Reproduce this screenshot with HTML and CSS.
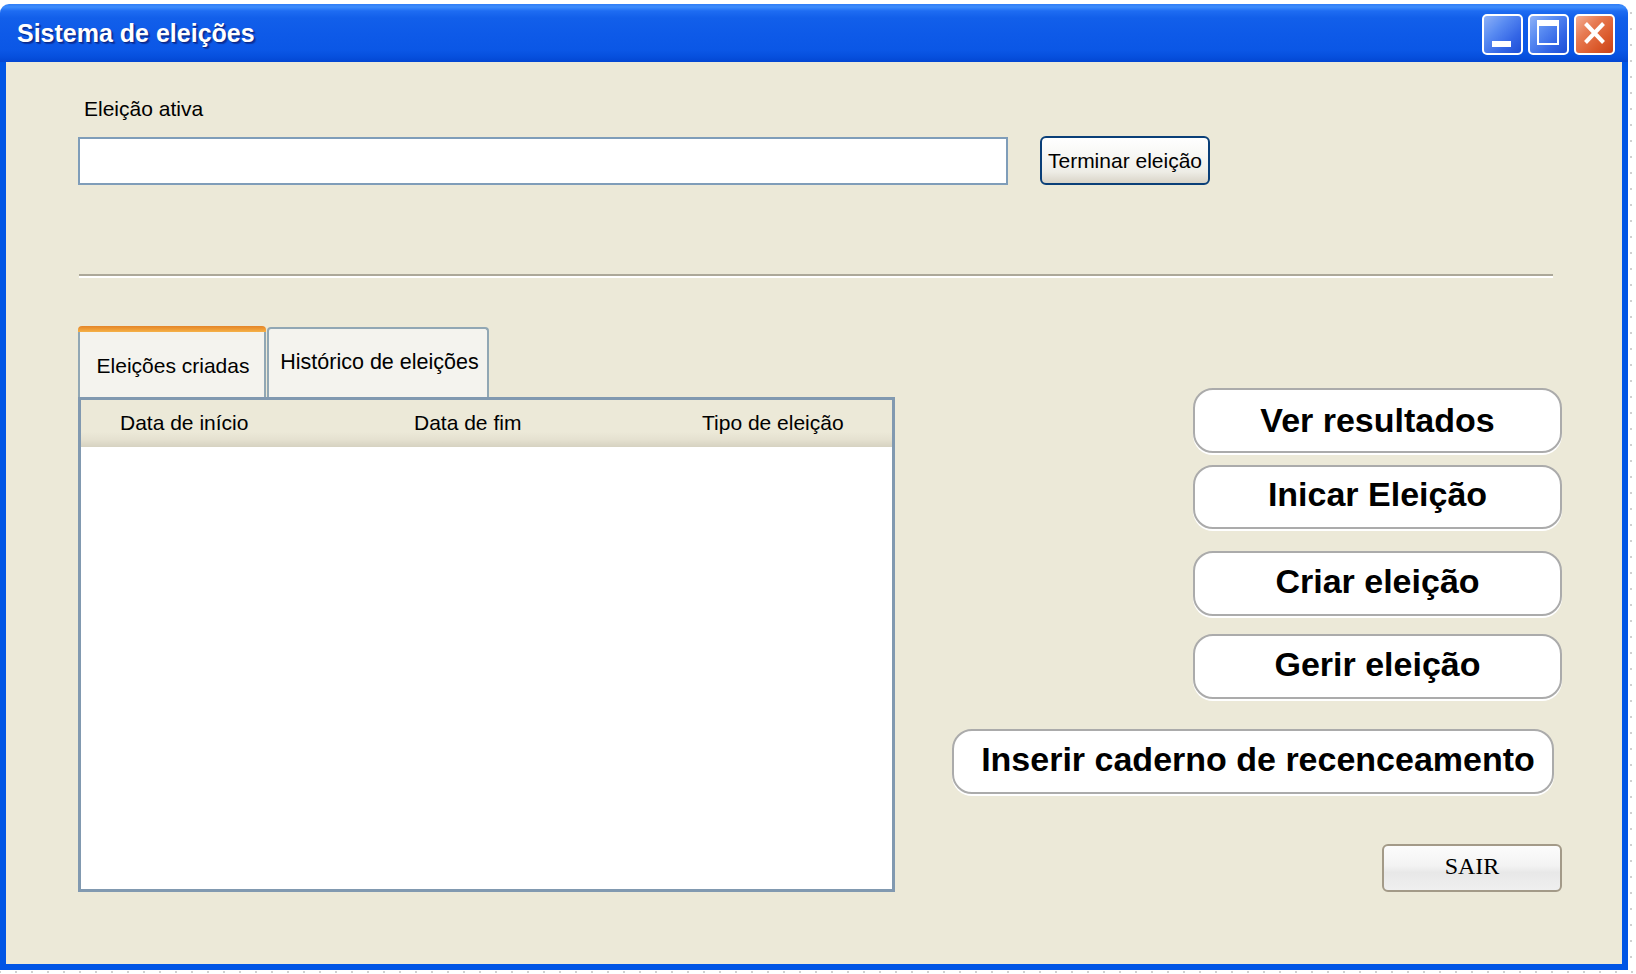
FILE: index.html
```html
<!DOCTYPE html>
<html lang="pt">
<head>
<meta charset="utf-8">
<title>Sistema de eleições</title>
<link rel="stylesheet" href="styles.css">
</head>
<body>
<div class="screen">
  <div class="top-row">
    <div class="window">
      <div class="titlebar">
        <div class="title">Sistema de eleições</div>
        <div class="tb-buttons">
          <div class="tb-btn tb-blue">
            <svg width="37" height="37" viewBox="0 0 37 37"><rect x="8" y="25" width="19" height="6" fill="#fff"/></svg>
          </div>
          <div class="tb-btn tb-blue">
            <svg width="37" height="37" viewBox="0 0 37 37"><rect x="8" y="5" width="20" height="23" fill="none" stroke="#fff" stroke-width="2"/><rect x="7" y="4" width="22" height="6" fill="#fff"/></svg>
          </div>
          <div class="tb-btn tb-red">
            <svg width="37" height="37" viewBox="0 0 37 37"><path d="M9.5 7.5 L27.5 26.5 M27.5 7.5 L9.5 26.5" stroke="#fff" stroke-width="4" fill="none"/></svg>
          </div>
        </div>
      </div>
      <div class="frame">
        <div class="content">
          <div class="label">Eleição ativa</div>
          <div class="active-row">
            <div class="active-input"></div>
            <button class="btn-end">Terminar eleição</button>
          </div>
          <div class="separator"></div>
          <div class="lower">
            <div class="tabs-block">
              <div class="tabs">
                <div class="tab tab-active">
                  <div class="tab-accent"></div>
                  <div class="tab-body">Eleições criadas</div>
                </div>
                <div class="tab tab-idle">Histórico de eleições</div>
              </div>
              <div class="table">
                <div class="thead">
                  <div class="th">Data de início</div>
                  <div class="th">Data de fim</div>
                  <div class="th">Tipo de eleição</div>
                </div>
                <div class="tbody"></div>
              </div>
            </div>
            <div class="actions">
              <button class="big-btn">Ver resultados</button>
              <button class="big-btn b-iniciar">Inicar Eleição</button>
              <button class="big-btn b-criar">Criar eleição</button>
              <button class="big-btn b-gerir">Gerir eleição</button>
              <button class="big-btn b-inserir">Inserir caderno de recenceamento</button>
              <button class="exit">SAIR</button>
            </div>
          </div>
        </div>
      </div>
    </div>
    <div class="dots-v"></div>
  </div>
  <div class="dots-h"></div>
</div>
</body>
</html>
```

FILE: styles.css
```css
html, body {
  margin: 0;
  padding: 0;
  background: #ffffff;
}

body {
  font-family: "Liberation Sans", Arial, sans-serif;
  color: #000;
}

.screen {
  width: 1636px;
  height: 974px;
  display: flex;
  flex-direction: column;
  overflow: hidden;
}

.top-row {
  display: flex;
  height: 970px;
}

.window {
  width: 1628px;
  height: 966px;
  margin-top: 4px;
  display: flex;
  flex-direction: column;
}

.titlebar {
  height: 58px;
  flex: none;
  border-radius: 9px 9px 0 0;
  background: linear-gradient(to bottom,
    #2F7DF6 0px, #3D8CFC 3px, #1E6CF2 7px, #125FEA 14px,
    #0E5AE8 30px, #0B57E6 46px, #064FDD 53px, #0346D2 58px);
  display: flex;
  align-items: center;
  justify-content: space-between;
  padding: 0 13px 0 17px;
  box-sizing: border-box;
}

.title {
  color: #fff;
  font-weight: bold;
  font-size: 25px;
  text-shadow: 1px 1px 0 #0B2A8C, 2px 2px 1px rgba(10, 30, 120, 0.6);
  margin-top: 1px;
}

.tb-buttons {
  display: flex;
  gap: 5px;
  margin-top: 3px;
}

.tb-btn {
  width: 41px;
  height: 41px;
  border: 2px solid #fff;
  border-radius: 5px;
  box-sizing: border-box;
  display: flex;
}

.tb-blue {
  background: linear-gradient(135deg, #8EB1F7 0%, #5A8CF2 35%, #3466E6 70%, #1E4FD6 100%);
}

.tb-red {
  background: linear-gradient(135deg, #F3AE94 0%, #E77A52 35%, #DB5A2C 70%, #C8421A 100%);
}

.frame {
  flex: 1;
  background: #0055E5;
  padding: 0 6px 6px 6px;
  display: flex;
}

.content {
  flex: 1;
  background: #ECE9D8;
  padding: 35px 60px 0 72px;
  display: flex;
  flex-direction: column;
}

.label {
  font-size: 21px;
  line-height: 24px;
  padding-left: 6px;
}

.active-row {
  display: flex;
  align-items: flex-start;
  margin-top: 15px;
}

.active-input {
  width: 930px;
  height: 48px;
  margin-top: 1px;
  background: #fff;
  border: 2px solid #7F9DB9;
  box-sizing: border-box;
}

.btn-end {
  margin-left: 32px;
  width: 170px;
  height: 49px;
  padding: 0;
  border: 2px solid #0A3F78;
  border-radius: 6px;
  background: linear-gradient(to bottom, #FFFFFF 0%, #F7F7F4 40%, #EEEDE6 75%, #D9D4C8 100%);
  font-family: "Liberation Sans", Arial, sans-serif;
  font-size: 21px;
  color: #000;
  box-sizing: border-box;
}

.separator {
  margin-top: 89px;
  margin-left: 1px;
  width: 1474px;
  height: 2px;
  background: #ACA899;
  border-bottom: 2px solid #fff;
}

.lower {
  display: flex;
  margin-top: 48px;
}

.tabs-block {
  width: 817px;
  display: flex;
  flex-direction: column;
}

.tabs {
  display: flex;
  align-items: flex-end;
  height: 71px;
}

.tab {
  box-sizing: border-box;
  font-size: 21px;
  line-height: 24px;
  text-align: center;
}

.tab-active {
  width: 188px;
  height: 71px;
  display: flex;
  flex-direction: column;
}

.tab-accent {
  height: 6px;
  border-radius: 4px 4px 0 0;
  background: linear-gradient(to bottom, #E3852A 0%, #EE9A34 50%, #F5B24A 100%);
}

.tab-body {
  flex: 1;
  background: #F4F3EE;
  border-left: 2px solid #91A7B4;
  border-right: 2px solid #91A7B4;
  padding-top: 22px;
  padding-left: 2px;
}

.tab-idle {
  width: 222px;
  height: 70px;
  margin-left: 1px;
  background: #F4F3EE;
  border: 2px solid #91A7B4;
  border-bottom: none;
  border-radius: 4px 4px 0 0;
  padding-top: 21px;
  font-size: 21.5px;
  padding-left: 3px;
}

.table {
  height: 495px;
  border: 3px solid #8199B0;
  background: #fff;
  box-sizing: border-box;
  display: flex;
  flex-direction: column;
}

.thead {
  height: 47px;
  flex: none;
  display: grid;
  grid-template-columns: 294px 288px 1fr;
  align-items: center;
  background: linear-gradient(to bottom, #ECE9D8 0%, #ECE9D8 68%, #E5E1D0 84%, #D6D2C1 100%);
  font-size: 21px;
  line-height: 24px;
}

.th {
  padding-left: 39px;
  padding-bottom: 2px;
  white-space: nowrap;
}

.tbody {
  flex: 1;
  background: #fff;
}

.actions {
  flex: 1;
  display: flex;
  flex-direction: column;
  align-items: flex-end;
  padding-top: 62px;
}

.big-btn {
  width: 369px;
  height: 65px;
  padding: 0;
  border: 2px solid #ABABAB;
  border-radius: 20px;
  background: #fff;
  box-shadow: 0 2px 0 #fff;
  font-family: "Liberation Sans", Arial, sans-serif;
  font-weight: bold;
  font-size: 34px;
  color: #000;
  box-sizing: border-box;
  white-space: nowrap;
}

.b-iniciar { margin-top: 12px; height: 64px; padding-bottom: 5px; }
.b-criar { margin-top: 22px; padding-bottom: 5px; }
.b-gerir { margin-top: 18px; padding-bottom: 4px; }
.b-inserir {
  margin-top: 30px;
  width: 602px;
  margin-right: 8px;
  padding: 0 0 4px 10px;
}

.exit {
  margin-top: 50px;
  width: 180px;
  height: 48px;
  padding: 0 0 3px 0;
  border: 2px solid #A39A88;
  border-radius: 6px;
  background: linear-gradient(to bottom, #FCFCFC 0%, #F3F3F3 45%, #E8E8E8 60%, #EFEFEF 100%);
  font-family: "Liberation Serif", "Times New Roman", serif;
  font-size: 24px;
  color: #000;
  box-sizing: border-box;
}

.dots-v {
  width: 8px;
  background-image: linear-gradient(to bottom, #D0D0D0 2px, transparent 2px);
  background-size: 2px 16px;
  background-repeat: repeat-y;
  background-position: 2px 12px;
}

.dots-h {
  height: 4px;
  background-image: linear-gradient(to right, #D0D0D0 2px, transparent 2px);
  background-size: 16px 2px;
  background-repeat: repeat-x;
  background-position: 15px 1px;
}
```
